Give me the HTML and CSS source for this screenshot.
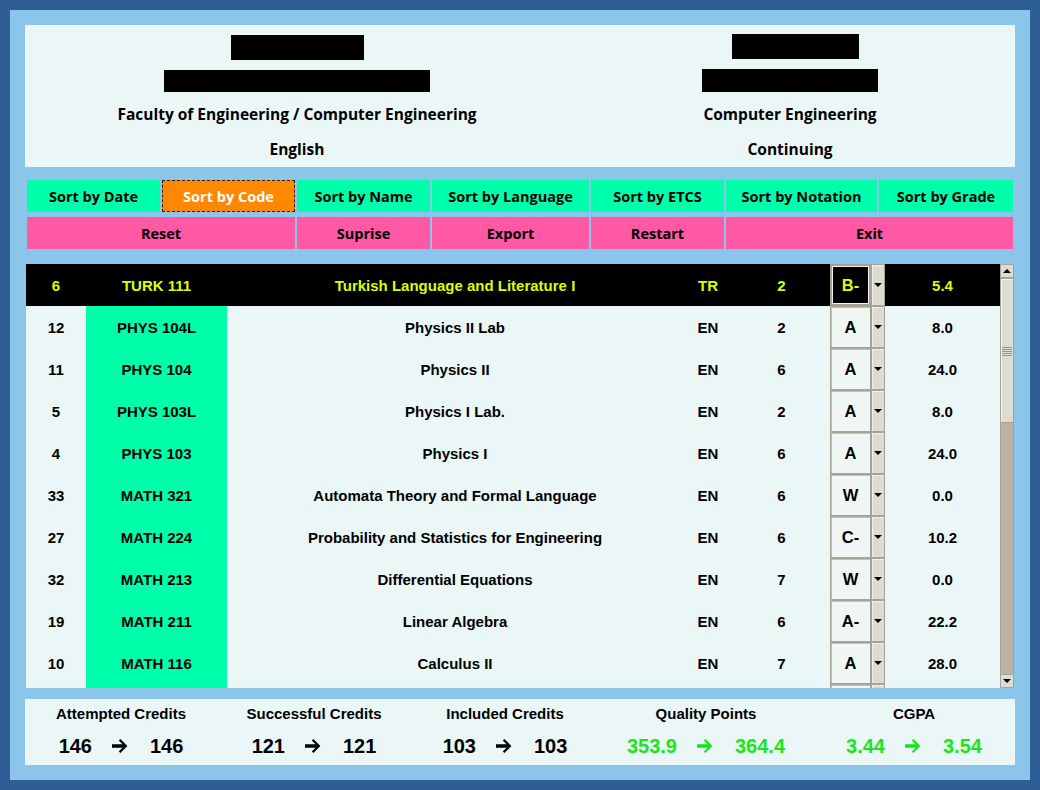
FILE: index.html
```html
<!DOCTYPE html>
<html>
<head>
<meta charset="utf-8">
<link rel="stylesheet" href="styles.css">
</head>
<body>
<div class="window">
  <div class="frame">
    <header class="info">
      <div class="info-col">
        <div class="redact r1"></div>
        <div class="redact r2"></div>
        <div class="info-line first">Faculty of Engineering / Computer Engineering</div>
        <div class="info-line second">English</div>
      </div>
      <div class="info-col right">
        <div class="redact r3"></div>
        <div class="redact r4"></div>
        <div class="info-line first">Computer Engineering</div>
        <div class="info-line second">Continuing</div>
      </div>
    </header>

    <nav class="toolbar">
      <button class="btn sort">Sort by Date</button>
      <button class="btn sort active">Sort by Code</button>
      <button class="btn sort">Sort by Name</button>
      <button class="btn sort">Sort by Language</button>
      <button class="btn sort">Sort by ETCS</button>
      <button class="btn sort">Sort by Notation</button>
      <button class="btn sort">Sort by Grade</button>
      <button class="btn action span2">Reset</button>
      <button class="btn action">Suprise</button>
      <button class="btn action">Export</button>
      <button class="btn action">Restart</button>
      <button class="btn action span2">Exit</button>
    </nav>

    <section class="table-area">
      <div class="rows">
        <div class="row selected">
          <div class="c idx">6</div><div class="c code">TURK 111</div><div class="c name">Turkish Language and Literature I</div><div class="c">TR</div><div class="c">2</div>
          <div class="combo"><div class="ctext">B-</div><div class="cbtn"><span class="tri"></span></div></div><div class="c">5.4</div>
        </div>
        <div class="row">
          <div class="c idx">12</div><div class="c code">PHYS 104L</div><div class="c name">Physics II Lab</div><div class="c">EN</div><div class="c">2</div>
          <div class="combo"><div class="ctext">A</div><div class="cbtn"><span class="tri"></span></div></div><div class="c">8.0</div>
        </div>
        <div class="row">
          <div class="c idx">11</div><div class="c code">PHYS 104</div><div class="c name">Physics II</div><div class="c">EN</div><div class="c">6</div>
          <div class="combo"><div class="ctext">A</div><div class="cbtn"><span class="tri"></span></div></div><div class="c">24.0</div>
        </div>
        <div class="row">
          <div class="c idx">5</div><div class="c code">PHYS 103L</div><div class="c name">Physics I Lab.</div><div class="c">EN</div><div class="c">2</div>
          <div class="combo"><div class="ctext">A</div><div class="cbtn"><span class="tri"></span></div></div><div class="c">8.0</div>
        </div>
        <div class="row">
          <div class="c idx">4</div><div class="c code">PHYS 103</div><div class="c name">Physics I</div><div class="c">EN</div><div class="c">6</div>
          <div class="combo"><div class="ctext">A</div><div class="cbtn"><span class="tri"></span></div></div><div class="c">24.0</div>
        </div>
        <div class="row">
          <div class="c idx">33</div><div class="c code">MATH 321</div><div class="c name">Automata Theory and Formal Language</div><div class="c">EN</div><div class="c">6</div>
          <div class="combo"><div class="ctext">W</div><div class="cbtn"><span class="tri"></span></div></div><div class="c">0.0</div>
        </div>
        <div class="row">
          <div class="c idx">27</div><div class="c code">MATH 224</div><div class="c name">Probability and Statistics for Engineering</div><div class="c">EN</div><div class="c">6</div>
          <div class="combo"><div class="ctext">C-</div><div class="cbtn"><span class="tri"></span></div></div><div class="c">10.2</div>
        </div>
        <div class="row">
          <div class="c idx">32</div><div class="c code">MATH 213</div><div class="c name">Differential Equations</div><div class="c">EN</div><div class="c">7</div>
          <div class="combo"><div class="ctext">W</div><div class="cbtn"><span class="tri"></span></div></div><div class="c">0.0</div>
        </div>
        <div class="row">
          <div class="c idx">19</div><div class="c code">MATH 211</div><div class="c name">Linear Algebra</div><div class="c">EN</div><div class="c">6</div>
          <div class="combo"><div class="ctext">A-</div><div class="cbtn"><span class="tri"></span></div></div><div class="c">22.2</div>
        </div>
        <div class="row">
          <div class="c idx">10</div><div class="c code">MATH 116</div><div class="c name">Calculus II</div><div class="c">EN</div><div class="c">7</div>
          <div class="combo"><div class="ctext">A</div><div class="cbtn"><span class="tri"></span></div></div><div class="c">28.0</div>
        </div>
        <div class="row partial">
          <div class="c idx"></div><div class="c code"></div><div class="c name"></div><div class="c"></div><div class="c"></div>
          <div class="combo"><div class="ctext"></div><div class="cbtn"></div></div><div class="c"></div>
        </div>
      </div>
      <div class="scrollbar">
        <div class="sb-btn"><span class="tri up"></span></div>
        <div class="sb-thumb"><span class="grip"></span></div>
        <div class="sb-track"></div>
        <div class="sb-btn"><span class="tri"></span></div>
      </div>
    </section>

    <footer class="summary">
      <div class="stat">
        <div class="label">Attempted Credits</div>
        <div class="values"><span>146</span><svg class="arrow" viewBox="0 0 18 14"><path d="M0 5.2H10.5L6.8 1.6L8.4 0L15.4 7L8.4 14L6.8 12.4L10.5 8.8H0Z"/></svg><span>146</span></div>
      </div>
      <div class="stat">
        <div class="label">Successful Credits</div>
        <div class="values"><span>121</span><svg class="arrow" viewBox="0 0 18 14"><path d="M0 5.2H10.5L6.8 1.6L8.4 0L15.4 7L8.4 14L6.8 12.4L10.5 8.8H0Z"/></svg><span>121</span></div>
      </div>
      <div class="stat">
        <div class="label">Included Credits</div>
        <div class="values"><span>103</span><svg class="arrow" viewBox="0 0 18 14"><path d="M0 5.2H10.5L6.8 1.6L8.4 0L15.4 7L8.4 14L6.8 12.4L10.5 8.8H0Z"/></svg><span>103</span></div>
      </div>
      <div class="stat">
        <div class="label">Quality Points</div>
        <div class="values green"><span>353.9</span><svg class="arrow" viewBox="0 0 18 14"><path d="M0 5.2H10.5L6.8 1.6L8.4 0L15.4 7L8.4 14L6.8 12.4L10.5 8.8H0Z"/></svg><span>364.4</span></div>
      </div>
      <div class="stat">
        <div class="label">CGPA</div>
        <div class="values green"><span>3.44</span><svg class="arrow" viewBox="0 0 18 14"><path d="M0 5.2H10.5L6.8 1.6L8.4 0L15.4 7L8.4 14L6.8 12.4L10.5 8.8H0Z"/></svg><span>3.54</span></div>
      </div>
    </footer>
  </div>
</div>
</body>
</html>
```

FILE: styles.css
```css
* { box-sizing: border-box; }
html, body { margin: 0; padding: 0; }
body {
  width: 1040px;
  height: 790px;
  overflow: hidden;
  font-family: "Liberation Sans", Arial, sans-serif;
}
.window {
  background: #2f5d95;
  padding: 10px;
  height: 790px;
}
.frame {
  background: #8bc5e9;
  height: 770px;
  padding: 15px 15px 0 15px;
  display: flex;
  flex-direction: column;
}

/* header */
.info {
  background: #ebf7f7;
  height: 142px;
  display: grid;
  grid-template-columns: 544px 442px;
  font-family: "Open Sans", "Noto Sans", sans-serif;
  font-weight: 700;
  font-size: 15.5px;
  color: #000;
}
.info-col {
  display: flex;
  flex-direction: column;
  align-items: center;
}
.redact { background: #000; }
.r1 { width: 133px; height: 25px; margin-top: 10px; }
.r2 { width: 266px; height: 22px; margin-top: 10px; }
.r3 { width: 127px; height: 25px; margin-top: 9px; margin-left: 11px; }
.r4 { width: 176px; height: 23px; margin-top: 10px; }
.info-line { line-height: 20px; height: 20px; white-space: nowrap; }
.info-line.first { margin-top: 12px; }
.info-line.second { margin-top: 15px; }

/* toolbar */
.toolbar {
  margin: 13px 2px 0 2px;
  display: grid;
  grid-template-columns: 133px 133px 133px 157px 133px 151px 134px;
  grid-auto-rows: 32px;
  column-gap: 2px;
  row-gap: 5px;
}
.btn {
  border: 0;
  margin: 0;
  padding: 0;
  font-family: "Open Sans", "Noto Sans", sans-serif;
  font-weight: 700;
  font-size: 14.5px;
  color: #000;
  white-space: nowrap;
}
.sort { background: #00ffaa; }
.sort.active {
  background: #ff8800;
  color: #fff;
  outline: 1px dashed #222;
  outline-offset: -1px;
}
.action { background: #ff58a5; }
.span2 { grid-column: span 2; }

/* table */
.table-area {
  margin: 15px 1px 0 1px;
  height: 424px;
  display: flex;
}
.rows {
  width: 974px;
  height: 424px;
  overflow: hidden;
  background: #ebf7f7;
}
.row {
  display: grid;
  grid-template-columns: 60px 141px 456px 50px 97px 55px 115px;
  height: 42px;
  font-weight: 700;
  font-size: 15px;
  color: #000;
}
.row.partial { height: 4px; overflow: hidden; }
.c {
  display: flex;
  align-items: center;
  justify-content: center;
  white-space: nowrap;
}
.code { background: #00ffaa; }
.row.selected { background: #000; color: #d8ff00; }
.row.selected .code { background: #000; }

.combo {
  display: flex;
  height: 42px;
  border: 1px solid #a8a294;
  background: #dedbd3;
}
.ctext {
  width: 41px;
  display: flex;
  align-items: center;
  justify-content: center;
  background: #eff6f4;
  border-right: 2px solid #a8a294;
  box-shadow: inset 1px 1px 0 #c5bfb2;
  font-size: 16.5px;
  color: #000;
}
.selected .ctext {
  background: #000;
  color: #d8ff00;
  box-shadow: inset 0 0 0 1px #a8a294, inset 0 0 0 2px #f4f4f0;
}
.cbtn {
  flex: 1;
  display: flex;
  align-items: center;
  justify-content: center;
  background: #dedbd3;
  box-shadow: inset 1px 1px 0 #f2f0ea;
}
.tri {
  width: 0;
  height: 0;
  border-left: 4px solid transparent;
  border-right: 4px solid transparent;
  border-top: 4px solid #000;
}
.tri.up {
  border-top: 0;
  border-bottom: 4px solid #000;
}

/* scrollbar */
.scrollbar {
  width: 14px;
  height: 424px;
  display: flex;
  flex-direction: column;
  background: #bab2a2;
}
.sb-btn {
  height: 14px;
  background: #dedbd3;
  border: 1px solid #a8a294;
  display: flex;
  align-items: center;
  justify-content: center;
}
.sb-thumb {
  height: 145px;
  background: #dedbd3;
  border: 1px solid #a8a294;
  box-shadow: inset 1px 1px 0 #f4f2ec;
  display: flex;
  justify-content: center;
  padding-top: 68px;
}
.grip {
  width: 10px;
  height: 9px;
  background: repeating-linear-gradient(to bottom, #9c9686 0, #9c9686 1px, transparent 1px, transparent 2px);
}
.sb-track {
  flex: 1;
  border-left: 1px solid #a8a294;
  border-right: 1px solid #a8a294;
}

/* summary */
.summary {
  margin-top: 11px;
  height: 66px;
  background: #ebf7f7;
  display: grid;
  grid-template-columns: 192px 194px 188px 214px 202px;
  padding-top: 5px;
}
.stat {
  display: flex;
  flex-direction: column;
  align-items: center;
}
.label {
  font-weight: 700;
  font-size: 15px;
  line-height: 20px;
  color: #000;
  white-space: nowrap;
}
.values {
  margin-top: 10px;
  display: flex;
  align-items: center;
  gap: 20px;
  font-weight: 700;
  font-size: 20px;
  line-height: 24px;
  color: #000;
}
.values.green { color: #19e619; }
.arrow {
  width: 18px;
  height: 14px;
  fill: currentColor;
}
```
